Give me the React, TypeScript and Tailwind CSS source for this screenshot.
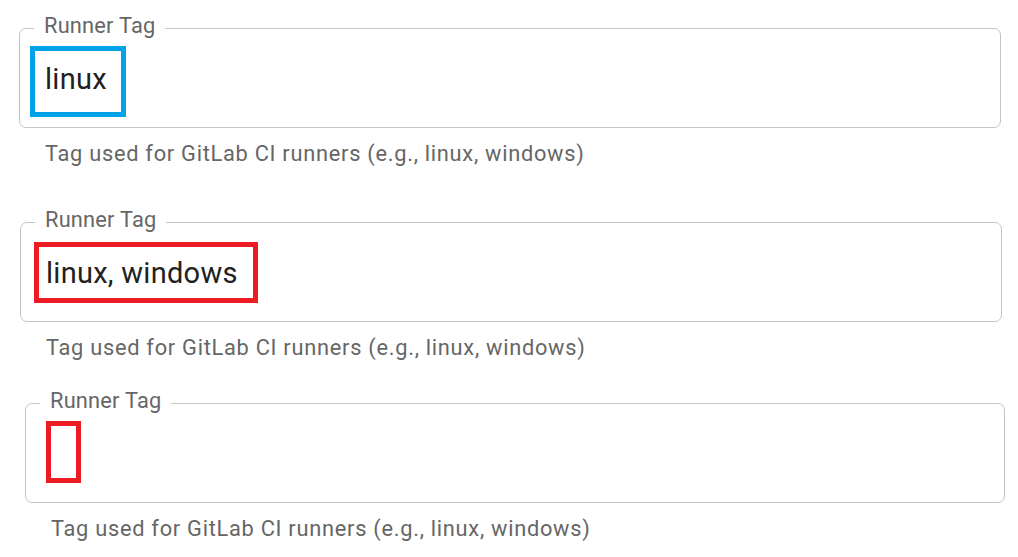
import React from "react";

type FieldProps = {
  className: string;
  value: string;
};

function RunnerTagField({ className, value }: FieldProps) {
  return (
    <div className={className}>
      <fieldset className="border border-[#c4c4c4] rounded-[7px] pl-[14px] pr-[14px] pb-[28px]">
        <legend className="px-[10px] text-[21.8px] leading-[24px] tracking-[0.00938em] text-[#666666]">
          <span className="relative top-[-2px]">Runner Tag</span>
        </legend>
        <div className="pl-[11px] pt-[19px] h-[59px] text-[29px] leading-[40px] tracking-[0.00938em] text-[#212121] whitespace-nowrap">
          {value}
        </div>
      </fieldset>
      <p className="mt-[8px] pl-[26px] text-[21.8px] leading-[36px] tracking-[0.0333em] text-[#666666] whitespace-nowrap">
        Tag used for GitLab CI runners (e.g., linux, windows)
      </p>
    </div>
  );
}

export default function App() {
  return (
    <div className="relative w-[1018px] h-[557px] overflow-hidden bg-white [font-family:Roboto,'Noto_Sans',sans-serif] flex flex-col">
      <RunnerTagField className="mt-[16px] ml-[19px] w-[982px]" value="linux" />
      <RunnerTagField className="mt-[38px] ml-[20px] w-[982px]" value="linux, windows" />
      <RunnerTagField className="mt-[25px] ml-[25px] w-[980px]" value="" />

      {/* annotation rectangles drawn over the screenshot */}
      <div className="absolute left-[30px] top-[46px] w-[96px] h-[71px] border-[5px] border-[#00a2e8]" />
      <div className="absolute left-[34px] top-[242px] w-[224px] h-[61px] border-[5px] border-[#ed1c24]" />
      <div className="absolute left-[46px] top-[421px] w-[35px] h-[62px] border-[5px] border-[#ed1c24]" />
    </div>
  );
}
